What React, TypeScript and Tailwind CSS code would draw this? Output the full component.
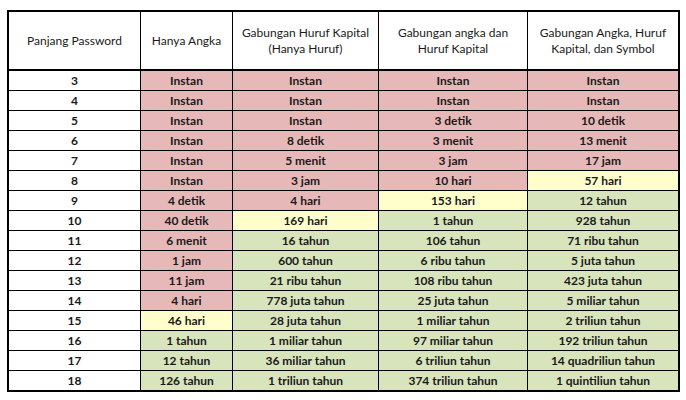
import React from 'react';

type Tone = 'r' | 'y' | 'g';

const toneClass: Record<Tone, string> = {
  r: 'bg-[#e6b8b7]',
  y: 'bg-[#ffffcc]',
  g: 'bg-[#d8e4bc]',
};

// [panjang, [teks, warna] x4]
const rows: [string, [string, Tone][]][] = [
  ['3', [['Instan', 'r'], ['Instan', 'r'], ['Instan', 'r'], ['Instan', 'r']]],
  ['4', [['Instan', 'r'], ['Instan', 'r'], ['Instan', 'r'], ['Instan', 'r']]],
  ['5', [['Instan', 'r'], ['Instan', 'r'], ['3 detik', 'r'], ['10 detik', 'r']]],
  ['6', [['Instan', 'r'], ['8 detik', 'r'], ['3 menit', 'r'], ['13 menit', 'r']]],
  ['7', [['Instan', 'r'], ['5 menit', 'r'], ['3 jam', 'r'], ['17 jam', 'r']]],
  ['8', [['Instan', 'r'], ['3 jam', 'r'], ['10 hari', 'r'], ['57 hari', 'y']]],
  ['9', [['4 detik', 'r'], ['4 hari', 'r'], ['153 hari', 'y'], ['12 tahun', 'g']]],
  ['10', [['40 detik', 'r'], ['169 hari', 'y'], ['1 tahun', 'g'], ['928 tahun', 'g']]],
  ['11', [['6 menit', 'r'], ['16 tahun', 'g'], ['106 tahun', 'g'], ['71 ribu tahun', 'g']]],
  ['12', [['1 jam', 'r'], ['600 tahun', 'g'], ['6 ribu tahun', 'g'], ['5 juta tahun', 'g']]],
  ['13', [['11 jam', 'r'], ['21 ribu tahun', 'g'], ['108 ribu tahun', 'g'], ['423 juta tahun', 'g']]],
  ['14', [['4 hari', 'r'], ['778 juta tahun', 'g'], ['25 juta tahun', 'g'], ['5 miliar tahun', 'g']]],
  ['15', [['46 hari', 'y'], ['28 juta tahun', 'g'], ['1 miliar tahun', 'g'], ['2 triliun tahun', 'g']]],
  ['16', [['1 tahun', 'g'], ['1 miliar tahun', 'g'], ['97 miliar tahun', 'g'], ['192 triliun tahun', 'g']]],
  ['17', [['12 tahun', 'g'], ['36 miliar tahun', 'g'], ['6 triliun tahun', 'g'], ['14 quadriliun tahun', 'g']]],
  ['18', [['126 tahun', 'g'], ['1 triliun tahun', 'g'], ['374 triliun tahun', 'g'], ['1 quintiliun tahun', 'g']]],
];

const cols = 'grid grid-cols-[131px_91px_145px_148px_150px] gap-x-px';

const App: React.FC = () => {
  return (
    <div className="w-[686px] h-[400px] bg-white pt-[10px] pl-[7px] font-['Lato','Noto_Sans',sans-serif] text-[12px] text-[#1a1a1a]">
      <div className="w-[673px] bg-black p-[2px]">
        {/* Header */}
        <div className={`${cols} h-[57px] leading-[16px]`}>
          <div className="bg-white flex items-center justify-center text-center">Panjang Password</div>
          <div className="bg-white flex items-center justify-center text-center">Hanya Angka</div>
          <div className="bg-white flex items-center justify-center text-center">
            Gabungan Huruf Kapital<br />(Hanya Huruf)
          </div>
          <div className="bg-white flex items-center justify-center text-center">
            Gabungan angka dan<br />Huruf Kapital
          </div>
          <div className="bg-white flex items-center justify-center text-center">
            Gabungan Angka, Huruf<br />Kapital, dan Symbol
          </div>
        </div>

        {/* Body */}
        <div className={`${cols} gap-y-px mt-[2px] font-bold leading-none`}>
          {rows.map(([len, cells]) => (
            <React.Fragment key={len}>
              <div className="bg-white h-[19px] flex items-center justify-center">{len}</div>
              {cells.map(([text, tone], i) => (
                <div key={i} className={`${toneClass[tone]} h-[19px] flex items-center justify-center`}>
                  {text}
                </div>
              ))}
            </React.Fragment>
          ))}
        </div>
      </div>
    </div>
  );
};

export default App;
